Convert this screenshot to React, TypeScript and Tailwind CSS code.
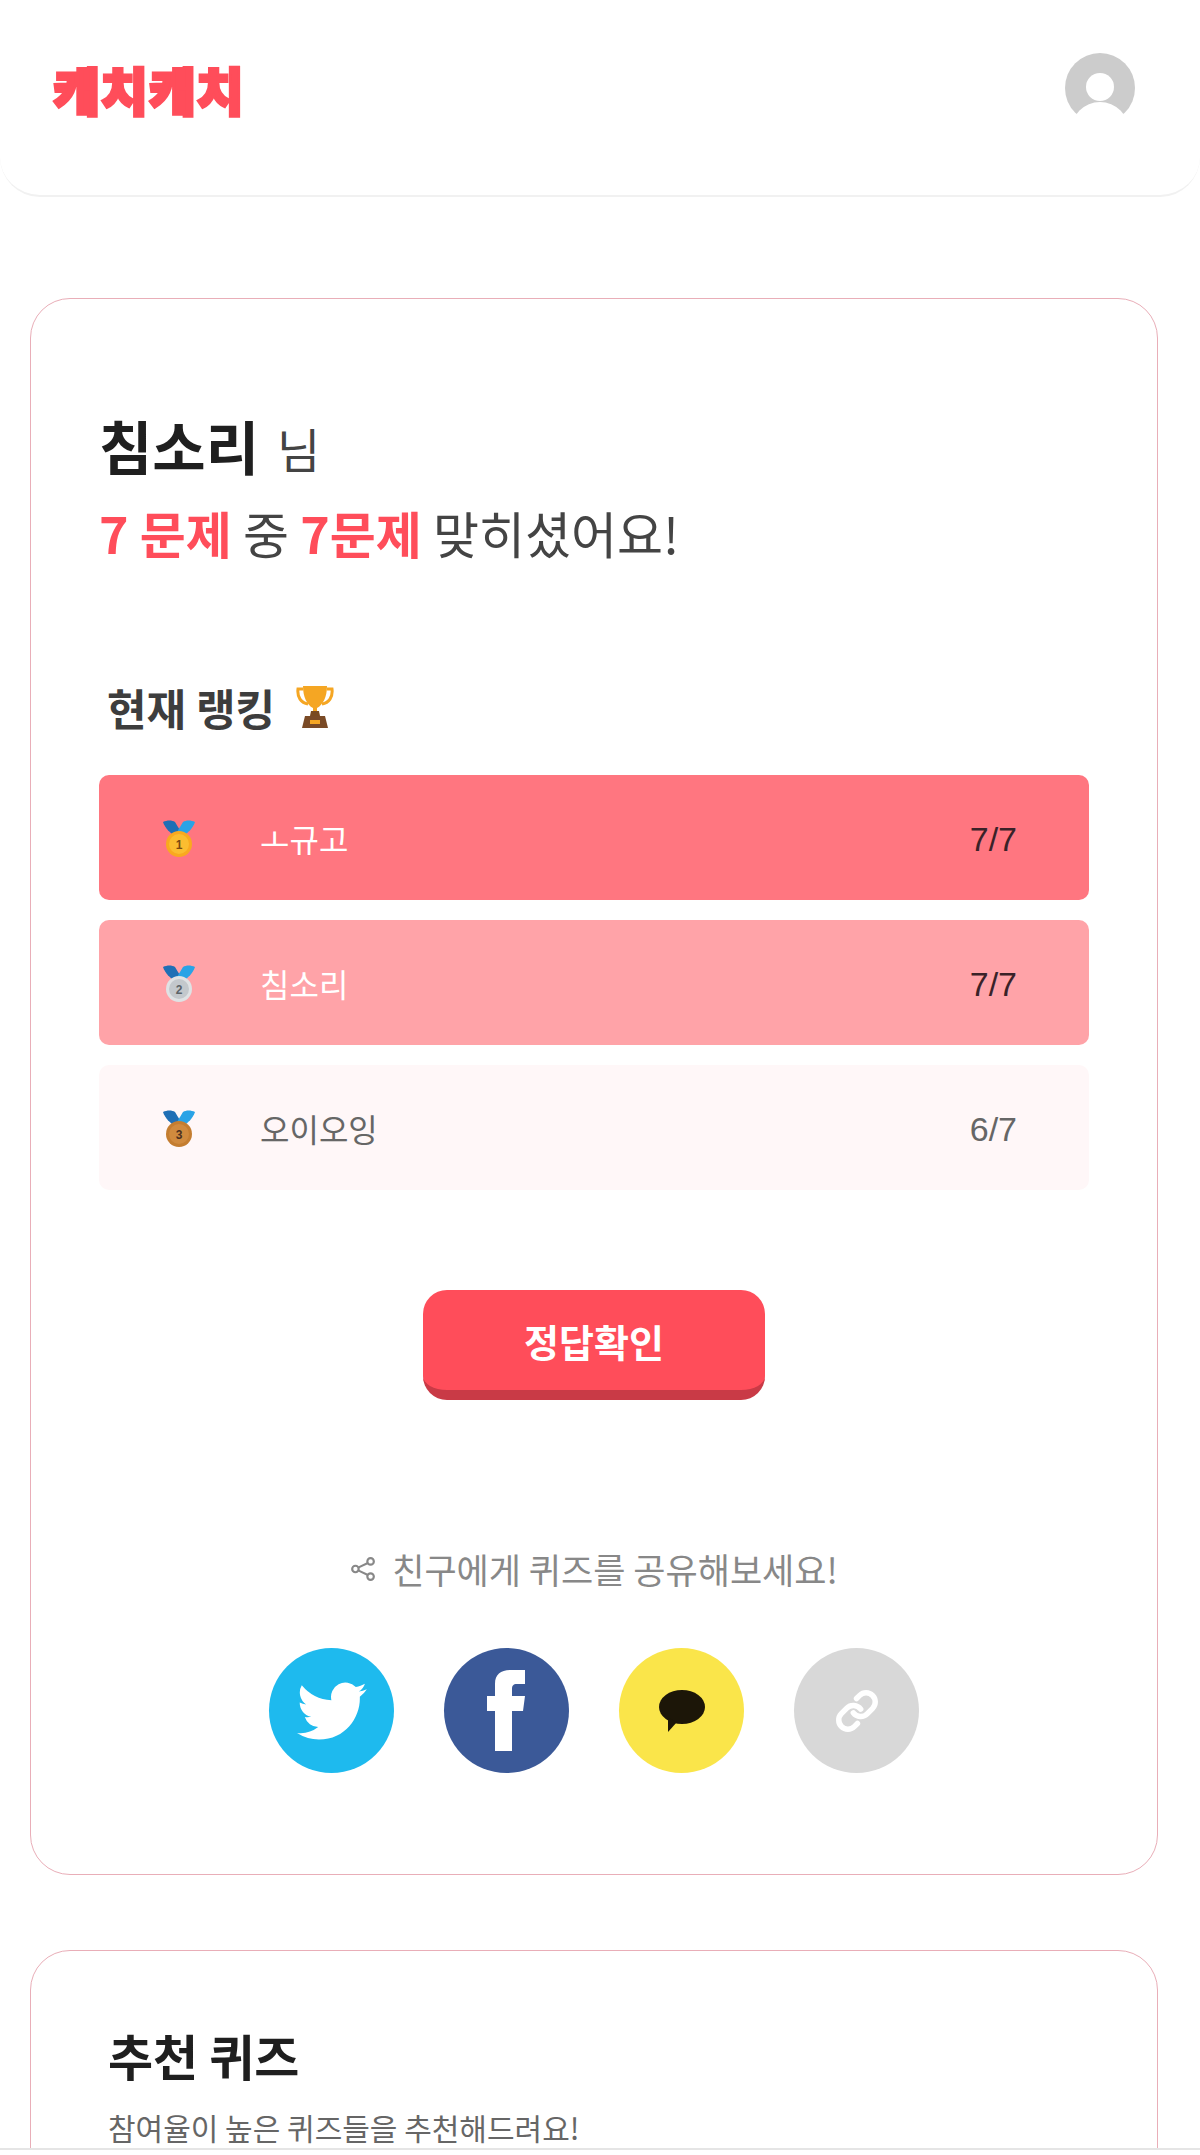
const KR = "font-['Noto_Sans_CJK_KR','Noto_Sans',sans-serif]";

const rows = [
  { name: "ㅗ규고", score: "7/7", medal: "1", bg: "bg-[#ff7680]", name_c: "text-white", score_c: "text-[#3a2228]", coin: "#fbbd30", edge: "#f9a91f", num: "#7a4a10" },
  { name: "침소리", score: "7/7", medal: "2", bg: "bg-[#ffa3a8]", name_c: "text-white", score_c: "text-[#3a2228]", coin: "#c3c8cc", edge: "#dfe2e4", num: "#5c6368" },
  { name: "오이오잉", score: "6/7", medal: "3", bg: "bg-[#fff7f8]", name_c: "text-[#666]", score_c: "text-[#666]", coin: "#d08a3e", edge: "#c47d30", num: "#4b3020" },
];

function Medal({ n, coin, edge, num }: { n: string; coin: string; edge: string; num: string }) {
  return (
    <svg className="mt-[3px]" width="34" height="38" viewBox="0 0 34 38">
      <path d="M1 2 C5 0 10 0 13 2 L19 12 L13 16 C8 13 3 8 1 2Z" fill="#1f6fb5" />
      <path d="M33 2 C29 0 24 0 21 2 L15 12 L21 16 C26 13 31 8 33 2Z" fill="#2aa3e6" />
      <circle cx="17" cy="24" r="13" fill={edge} />
      <circle cx="17" cy="24" r="10" fill={coin} />
      <text x="17" y="28.5" textAnchor="middle" fontSize="12" fontWeight="700" fill={num} fontFamily="Liberation Sans, sans-serif">
        {n}
      </text>
    </svg>
  );
}

function Trophy() {
  return (
    <svg width="38" height="44" viewBox="0 0 38 44">
      <path d="M7 4 H2 C1 12 5 18 12 19" fill="none" stroke="#f5a623" strokeWidth="3" />
      <path d="M31 4 H36 C37 12 33 18 26 19" fill="none" stroke="#f5a623" strokeWidth="3" />
      <path d="M7 1 H31 C31 12 27 20 21 23 V29 H17 V23 C11 20 7 12 7 1Z" fill="#f5a623" />
      <path d="M15 26 H23 L24 31 H14Z" fill="#7a4a20" />
      <path d="M9 31 H29 L32 43 H6Z" fill="#7a4a26" />
      <rect x="14" y="35" width="10" height="4" fill="#f5a623" />
    </svg>
  );
}

export default function App() {
  return (
    <div className={`${KR} relative h-[2155px] overflow-hidden bg-white`}>
      <header className="flex h-[197px] items-start justify-between rounded-b-[40px] border-b-2 border-[#f1f1f1] pl-[53px] pr-[65px] pt-[53px]">
        <span className="mt-[1px] text-[51px] font-black leading-[70px] tracking-[1px] text-[#ff4d5a] [-webkit-text-stroke:3px_#ff4d5a]">
          캐치캐치
        </span>
        <div className="relative h-[70px] w-[70px] rounded-full bg-[#cccccc]">
          <div className="absolute left-[21px] top-[20px] h-[28px] w-[28px] rounded-full bg-white" />
          <div className="absolute left-[6px] top-[49px] h-[58px] w-[58px] rounded-full bg-white" />
        </div>
      </header>

      <main className="flex flex-col gap-[75px] pl-[30px] pr-[42px] pt-[101px]">
        <section className="flex h-[1577px] flex-col rounded-[40px] border border-[#e9aeb8] px-[68px] pt-[111px]">
          <div className="flex items-end gap-[18px]">
            <span className="text-[58px] font-bold leading-[70px] text-[#1f1f1f]">침소리</span>
            <span className="text-[47px] leading-[64px] text-[#444]">님</span>
          </div>
          <p className="mt-[20px] text-[50px] leading-[64px] text-[#444]">
            <b className="font-bold text-[#ff4d5a]">7 문제</b> 중 <b className="font-bold text-[#ff4d5a]">7문제</b> 맞히셨어요!
          </p>

          <div className="mt-[115px] flex h-[56px] items-center gap-[21px] pl-[8px]">
            <span className="text-[43px] font-bold leading-[56px] text-[#3d3d3d]">현재 랭킹</span>
            <Trophy />
          </div>

          <div className="mt-[40px] flex flex-col gap-[20px]">
            {rows.map((r) => (
              <div key={r.medal} className={`${r.bg} flex h-[125px] items-center rounded-[10px] pl-[63px] pr-[72px]`}>
                <Medal n={r.medal} coin={r.coin} edge={r.edge} num={r.num} />
                <span className={`${r.name_c} ml-[64px] flex-1 text-[32px] leading-[44px]`}>{r.name}</span>
                <span className={`${r.score_c} mt-[3px] font-['Liberation_Sans',sans-serif] text-[34px] leading-[40px]`}>{r.score}</span>
              </div>
            ))}
          </div>

          <button className="mx-auto mt-[100px] h-[110px] w-[342px] rounded-[24px] border-b-[10px] border-[#c93a46] bg-[#ff4d5a] text-[38px] font-bold text-white">
            정답확인
          </button>

          <div className="mt-[144px] flex items-center justify-center gap-[16px] text-[35px] leading-[50px] text-[#888]">
            <svg width="26" height="26" viewBox="0 0 24 24" fill="none" stroke="#888" strokeWidth="2">
              <circle cx="19" cy="5" r="3" />
              <circle cx="5" cy="12" r="3" />
              <circle cx="19" cy="19" r="3" />
              <path d="M8 10.5 16.5 6.5M8 13.5 16.5 17.5" />
            </svg>
            친구에게 퀴즈를 공유해보세요!
          </div>

          <div className="mt-[54px] flex justify-center gap-[50px]">
            <div className="flex h-[125px] w-[125px] items-center justify-center rounded-full bg-[#1ebaee]">
              <svg width="70" height="70" viewBox="0 0 24 24" fill="white">
                <path d="M23.95 4.57a10 10 0 0 1-2.82.77 4.96 4.96 0 0 0 2.16-2.72c-.95.55-2 .95-3.12 1.18a4.92 4.92 0 0 0-8.38 4.48A13.96 13.96 0 0 1 1.64 3.16a4.92 4.92 0 0 0 1.52 6.57 4.9 4.9 0 0 1-2.23-.61v.06a4.92 4.92 0 0 0 3.95 4.83 4.96 4.96 0 0 1-2.21.08 4.94 4.94 0 0 0 4.6 3.42A9.87 9.87 0 0 1 0 19.54a13.94 13.94 0 0 0 7.55 2.21c9.06 0 14-7.5 14-13.98 0-.21 0-.42-.01-.63a10 10 0 0 0 2.41-2.57z" />
              </svg>
            </div>
            <div className="flex h-[125px] w-[125px] items-center justify-center rounded-full bg-[#3b5998]">
              <svg className="ml-[-2px]" width="38" height="81" viewBox="0 0 38 81" fill="white">
                <path d="M8 81 V41 H0 V26 H8 V14 C8 4 14 0 24 0 H38 V14 H30 C26 14 25 16 25 19 V26 H38 L36 41 H25 V81Z" />
              </svg>
            </div>
            <div className="flex h-[125px] w-[125px] items-center justify-center rounded-full bg-[#fae54a]">
              <svg width="46" height="42" viewBox="0 0 46 42" fill="#1c1608">
                <ellipse cx="23" cy="17" rx="23" ry="17" />
                <path d="M9 28 L9 42 L18 32Z" />
              </svg>
            </div>
            <div className="flex h-[125px] w-[125px] items-center justify-center rounded-full bg-[#d8d8d8]">
              <svg width="44" height="44" viewBox="0 0 24 24" fill="none" stroke="white" strokeWidth="3" strokeLinecap="round" strokeLinejoin="round">
                <path d="M10 13a5 5 0 0 0 7.54.54l3-3a5 5 0 0 0-7.07-7.07l-1.72 1.71" />
                <path d="M14 11a5 5 0 0 0-7.54-.54l-3 3a5 5 0 0 0 7.07 7.07l1.71-1.71" />
              </svg>
            </div>
          </div>
        </section>

        <section className="h-[400px] rounded-[40px] border border-[#e9aeb8] px-[77px] pt-[74px]">
          <h2 className="text-[49px] font-bold leading-[60px] text-[#1f1f1f]">추천 퀴즈</h2>
          <p className="mt-[21px] text-[30px] leading-[42px] text-[#666]">참여율이 높은 퀴즈들을 추천해드려요!</p>
        </section>
      </main>

      <div className="absolute bottom-0 left-0 h-[7px] w-full border-t-2 border-[#e5e5e5] bg-white" />
    </div>
  );
}
